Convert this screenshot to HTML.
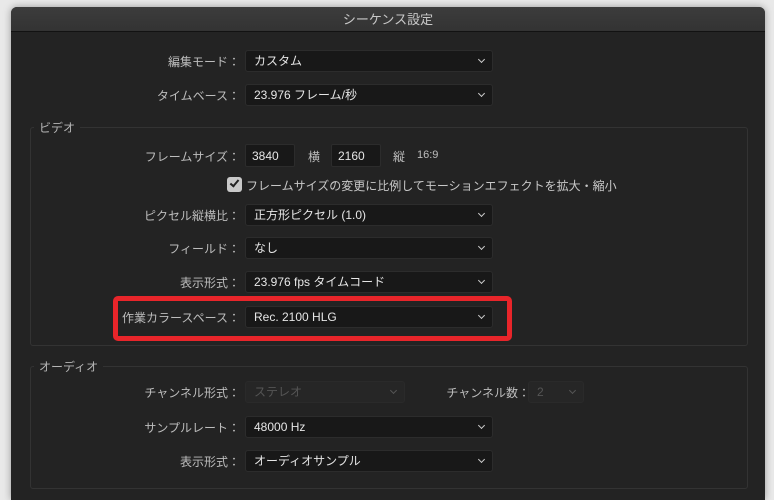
<!DOCTYPE html>
<html style="width:774px;height:500px;overflow:hidden"><head><meta charset="utf-8"><style>
*{box-sizing:border-box;margin:0;padding:0}
body{width:774px;height:500px;background:#e9e9e9;position:relative;overflow:hidden;font-family:"Liberation Sans","Noto Sans CJK JP",sans-serif;font-size:12px;color:#bdbdbd}
.win{position:absolute;left:11px;top:7px;width:754px;height:493px;background:#232323;border-radius:6px 6px 0 0;box-shadow:0 0 8px rgba(0,0,0,.35);overflow:hidden}
.title{height:25px;background:linear-gradient(#3c3c3c,#333);border-bottom:1px solid #121212;text-align:center;line-height:25px;color:#c8c8c8;font-size:13px}
.abs{position:absolute}
.lbl{position:absolute;text-align:right;width:240px;left:0;white-space:nowrap}
.dd{position:absolute;height:22px;background:#181818;border:1px solid #2c2c2c;border-radius:3px;color:#e6e6e6;padding-left:8px;line-height:20px;white-space:nowrap}
.dd:after{content:"";position:absolute;right:8px;top:6px;width:4px;height:4px;border-right:1.5px solid #ccc;border-bottom:1.5px solid #ccc;transform:rotate(45deg)}
.dd.dis{background:#262626;color:#555;border-color:#2a2a2a}
.dd.dis:after{border-color:#555}
.panel{position:absolute;border:1px solid #333;border-radius:3px}
.leg{position:absolute;background:#232323;padding:0 5px;color:#b5b5b5}
.tb{position:absolute;height:23px;background:#181818;border:1px solid #2c2c2c;border-radius:2px;color:#e6e6e6;padding-left:6px;line-height:22px}
</style></head><body>
<div class="win"><div class="title">シーケンス設定</div></div>
<div class="panel" style="left:30px;top:127px;width:718px;height:219px"></div>
<div class="leg" style="left:34px;top:119px">ビデオ</div>
<div class="panel" style="left:30px;top:366px;width:718px;height:123px"></div>
<div class="leg" style="left:34px;top:358px">オーディオ</div>

<div class="lbl" style="top:53px">編集モード：</div>
<div class="dd" style="left:245px;top:50px;width:248px">カスタム</div>
<div class="lbl" style="top:87px">タイムベース：</div>
<div class="dd" style="left:245px;top:84px;width:248px">23.976 フレーム/秒</div>

<div class="lbl" style="top:148px">フレームサイズ：</div>
<div class="tb" style="left:245px;top:144px;width:50px">3840</div>
<div class="abs" style="left:308px;top:148px">横</div>
<div class="tb" style="left:331px;top:144px;width:50px">2160</div>
<div class="abs" style="left:393px;top:148px">縦</div>
<div class="abs" style="left:417px;top:149px;font-size:11px">16:9</div>

<div class="abs" style="left:227px;top:177px;width:15px;height:15px;background:#c9c9c9;border-radius:3px"></div>
<div class="abs" style="left:232px;top:178px;width:5px;height:9px;border-right:2px solid #222;border-bottom:2px solid #222;transform:rotate(40deg)"></div>
<div class="abs" style="left:246px;top:177px;color:#c8c8c8">フレームサイズの変更に比例してモーションエフェクトを拡大・縮小</div>

<div class="lbl" style="top:207px">ピクセル縦横比：</div>
<div class="dd" style="left:245px;top:204px;width:248px">正方形ピクセル (1.0)</div>
<div class="lbl" style="top:240px">フィールド：</div>
<div class="dd" style="left:245px;top:237px;width:248px">なし</div>
<div class="lbl" style="top:274px">表示形式：</div>
<div class="dd" style="left:245px;top:271px;width:248px">23.976 fps タイムコード</div>
<div class="lbl" style="top:309px">作業カラースペース：</div>
<div class="dd" style="left:245px;top:306px;width:248px">Rec. 2100 HLG</div>
<div class="abs" style="left:113px;top:296px;width:399px;height:45px;border:5px solid #e8252a;border-radius:5px"></div>

<div class="lbl" style="top:384px">チャンネル形式：</div>
<div class="dd dis" style="left:245px;top:381px;width:160px">ステレオ</div>
<div class="abs" style="left:420px;top:384px;width:110px;text-align:right">チャンネル数：</div>
<div class="dd dis" style="left:528px;top:381px;width:56px">2</div>
<div class="lbl" style="top:419px">サンプルレート：</div>
<div class="dd" style="left:245px;top:416px;width:248px">48000 Hz</div>
<div class="lbl" style="top:453px">表示形式：</div>
<div class="dd" style="left:245px;top:450px;width:248px">オーディオサンプル</div>
</body></html>
